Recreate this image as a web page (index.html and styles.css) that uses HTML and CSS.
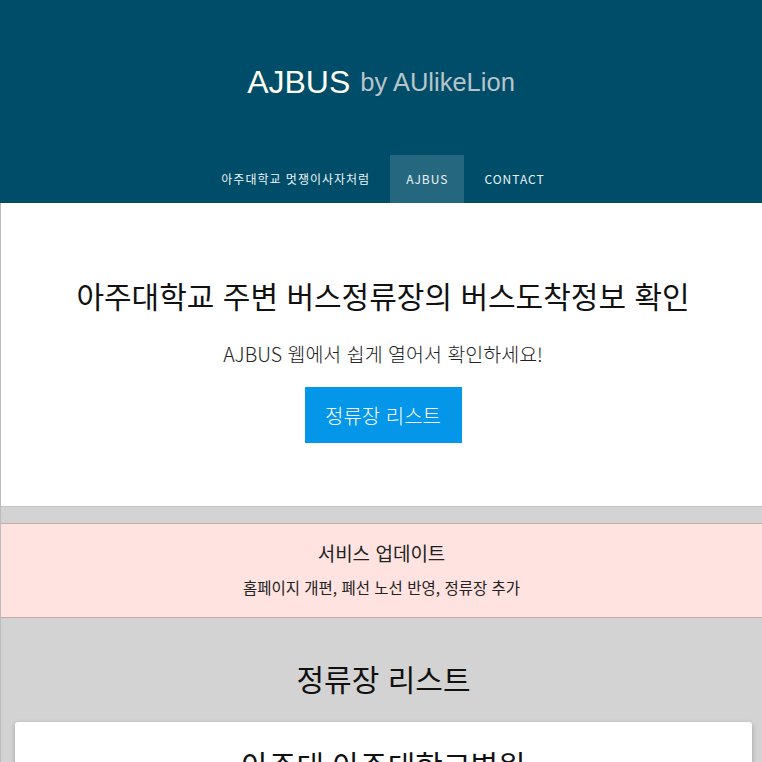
FILE: index.html
```html
<!DOCTYPE html>
<html lang="ko">
<head>
<meta charset="utf-8">
<title>AJBUS</title>
<link rel="stylesheet" href="styles.css">
</head>
<body>
<header class="site-header">
  <div class="brand">
    <span class="brand-main">AJBUS</span>
    <span class="brand-sub">by AUlikeLion</span>
  </div>
  <nav class="nav">
    <a class="nav-item" href="#">아주대학교 멋쟁이사자처럼</a>
    <a class="nav-item active" href="#">AJBUS</a>
    <a class="nav-item" href="#">CONTACT</a>
  </nav>
</header>
<main class="main">
  <section class="hero">
    <h1 class="hero-title">아주대학교 주변 버스정류장의 버스도착정보 확인</h1>
    <p class="hero-sub">AJBUS 웹에서 쉽게 열어서 확인하세요!</p>
    <a class="hero-btn" href="#">정류장 리스트</a>
  </section>
  <section class="notice">
    <h2 class="notice-title">서비스 업데이트</h2>
    <p class="notice-text">홈페이지 개편, 폐선 노선 반영, 정류장 추가</p>
  </section>
  <section class="stops">
    <h2 class="stops-title">정류장 리스트</h2>
    <div class="card">
      <h3 class="card-title">아주대 아주대학교병원</h3>
    </div>
  </section>
</main>
</body>
</html>
```
FILE: styles.css
```css
html, body {
  margin: 0;
  padding: 0;
}
body {
  background: #d3d3d3;
  font-family: "Noto Sans CJK KR", "Noto Sans", sans-serif;
  color: #111;
  overflow: hidden;
}
.site-header {
  background: #004d6a;
  display: flex;
  flex-direction: column;
  align-items: center;
}
.brand {
  height: 155px;
  display: flex;
  align-items: center;
  justify-content: center;
  gap: 10px;
  font-family: "Liberation Sans", Arial, sans-serif;
  padding-top: 10px;
  box-sizing: border-box;
}
.brand-main {
  font-size: 32px;
  color: #fdfdf0;
}
.brand-sub {
  font-size: 25.5px;
  color: #b9c4c9;
}
.nav {
  display: flex;
  height: 48px;
  margin-left: 4px;
}
.nav-item {
  display: flex;
  align-items: center;
  padding: 0 16px 1px;
  font-size: 12px;
  letter-spacing: 1px;
  color: #eef3f5;
  text-decoration: none;
  margin: 0 2px;
}
.nav-item.active {
  background: #266780;
}
.main {
  border-left: 1px solid #bcbcbc;
}
.hero {
  background: #fff;
  border-bottom: 1px solid #c4c4c4;
  height: 304px;
  box-sizing: border-box;
  display: flex;
  flex-direction: column;
  align-items: center;
  padding-top: 72px;
  padding-left: 3px;
}
.hero-title {
  margin: 0;
  font-weight: 400;
  font-size: 30px;
  line-height: 40px;
  color: #111;
}
.hero-sub {
  margin: 26px 0 0;
  font-size: 19.5px;
  line-height: 26px;
  font-weight: 300;
  color: #222;
}
.hero-btn {
  margin-top: 20px;
  width: 157px;
  height: 56px;
  background: #0396e9;
  color: #fff;
  text-decoration: none;
  font-size: 20px;
  font-weight: 300;
  display: flex;
  align-items: center;
  justify-content: center;
}
.notice {
  margin-top: 16px;
  background: #ffe3e0;
  border-top: 1px solid #c9acaa;
  border-bottom: 1px solid #c9acaa;
  height: 95px;
  box-sizing: border-box;
  display: flex;
  flex-direction: column;
  align-items: center;
  padding-top: 16px;
}
.notice-title {
  margin: 0;
  font-size: 19px;
  font-weight: 400;
  line-height: 26px;
  color: #222;
}
.notice-text {
  margin: 11px 0 0;
  font-size: 15.5px;
  line-height: 20px;
  color: #222;
}
.stops {
  padding: 40px 10px 0 14px;
  display: flex;
  flex-direction: column;
  align-items: center;
}
.stops-title {
  margin: 0;
  font-size: 30px;
  font-weight: 400;
  line-height: 40px;
  color: #111;
}
.card {
  margin-top: 24px;
  align-self: stretch;
  background: #fff;
  border-radius: 3px;
  box-shadow: 0 2px 5px rgba(0,0,0,0.25);
  height: 200px;
  display: flex;
  justify-content: center;
  padding-top: 22px;
  box-sizing: border-box;
}
.card-title {
  margin: 0;
  font-size: 30px;
  font-weight: 400;
  line-height: 40px;
  color: #111;
}
```
